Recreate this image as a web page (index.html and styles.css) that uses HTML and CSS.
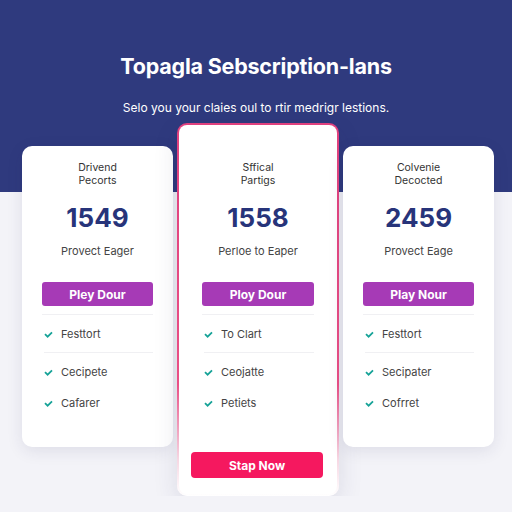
FILE: index.html
```html
<!DOCTYPE html>
<html lang="en">
<head>
  <meta charset="UTF-8">
  <title>Subscription Plans</title>
  <link rel="stylesheet" href="styles.css">
</head>
<body>
  <header class="hero">
    <h1>Topagla Sebscription-lans</h1>
    <p>Selo you your claies oul to rtir medrigr lestions.</p>
  </header>

  <section class="plans">
    <div class="plan">
      <div class="plan-name">Drivend<br>Pecorts</div>
      <div class="plan-price">1549</div>
      <div class="plan-note">Provect Eager</div>
      <button class="plan-btn">Pley Dour</button>
      <ul class="features">
        <li class="sep"><svg viewBox="0 0 10 8"><path d="M1 3.5 4 6.5 9 1.5"/></svg>Festtort</li>
        <li><svg viewBox="0 0 10 8"><path d="M1 3.5 4 6.5 9 1.5"/></svg>Cecipete</li>
        <li><svg viewBox="0 0 10 8"><path d="M1 3.5 4 6.5 9 1.5"/></svg>Cafarer</li>
      </ul>
    </div>

    <div class="plan featured">
      <div class="plan-name">Sffical<br>Partigs</div>
      <div class="plan-price">1558</div>
      <div class="plan-note">Perloe to Eaper</div>
      <button class="plan-btn">Ploy Dour</button>
      <ul class="features">
        <li class="sep"><svg viewBox="0 0 10 8"><path d="M1 3.5 4 6.5 9 1.5"/></svg>To Clart</li>
        <li><svg viewBox="0 0 10 8"><path d="M1 3.5 4 6.5 9 1.5"/></svg>Ceojatte</li>
        <li><svg viewBox="0 0 10 8"><path d="M1 3.5 4 6.5 9 1.5"/></svg>Petiets</li>
      </ul>
      <button class="cta-btn">Stap Now</button>
    </div>

    <div class="plan">
      <div class="plan-name">Colvenie<br>Decocted</div>
      <div class="plan-price">2459</div>
      <div class="plan-note">Provect Eage</div>
      <button class="plan-btn">Play Nour</button>
      <ul class="features">
        <li class="sep"><svg viewBox="0 0 10 8"><path d="M1 3.5 4 6.5 9 1.5"/></svg>Festtort</li>
        <li><svg viewBox="0 0 10 8"><path d="M1 3.5 4 6.5 9 1.5"/></svg>Secipater</li>
        <li><svg viewBox="0 0 10 8"><path d="M1 3.5 4 6.5 9 1.5"/></svg>Cofrret</li>
      </ul>
    </div>
  </section>
</body>
</html>
```

FILE: styles.css
```css
body {
  margin: 0;
  font-family: "Inter", "Liberation Sans", sans-serif;
  background-color: #f3f3f8;
}

.hero {
  height: 192px;
  box-sizing: border-box;
  padding-top: 52px;
  background-color: #2f3a7e;
  color: #ffffff;
  text-align: center;
}

.hero h1 {
  margin: 0;
  font-size: 21.5px;
  line-height: 28px;
  font-weight: 700;
  letter-spacing: -0.2px;
}

.hero p {
  margin: 20px 0 0;
  font-size: 12px;
  line-height: 16px;
}

.plans {
  display: flex;
  align-items: flex-start;
  gap: 4px;
  padding: 0 18px 0 22px;
  margin-top: -69px;
}

.plan {
  width: 151px;
  box-sizing: border-box;
  margin-top: 23px;
  padding: 15px 20px 32px;
  background-color: #ffffff;
  border-radius: 10px;
  box-shadow: 0 4px 16px rgba(40, 40, 90, 0.10);
  text-align: center;
}

.plan.featured {
  width: 162px;
  margin-top: 0;
  padding: 36px 23px 16px;
  border: 2px solid transparent;
  background: linear-gradient(#ffffff, #ffffff) padding-box,
    linear-gradient(#e0407e, #ea4f86 70%, #f6d6e2 90%, #ffffff) border-box;
  box-shadow: 0 8px 24px rgba(40, 40, 90, 0.12);
}

.plan-name {
  font-size: 10.5px;
  line-height: 13px;
  color: #333333;
}

.plan-price {
  margin-top: 16px;
  font-size: 26px;
  line-height: 30px;
  font-weight: 700;
  color: #27347a;
}

.plan-note {
  margin-top: 11px;
  font-size: 11px;
  line-height: 14px;
  color: #444444;
}

.plan-btn {
  display: block;
  width: 100%;
  height: 24px;
  margin-top: 24px;
  border: none;
  border-radius: 3px;
  background-color: #a63ab6;
  color: #ffffff;
  font-family: inherit;
  font-size: 12px;
  font-weight: 700;
}

.features {
  list-style: none;
  margin: 8px 0 0;
  padding: 0 0 0 2px;
  border-top: 1px solid #f0f0f3;
  text-align: left;
}

.features li {
  display: flex;
  align-items: center;
  gap: 8px;
  padding: 12px 0 5px;
  font-size: 11px;
  line-height: 14px;
  color: #444444;
}

.features li.sep {
  padding-bottom: 11px;
  border-bottom: 1px solid #f0f0f3;
}

.features svg {
  width: 9px;
  height: 7px;
  fill: none;
  stroke: #17a398;
  stroke-width: 2;
}

.cta-btn {
  display: block;
  width: 132px;
  height: 26px;
  margin: 37px -11px 0;
  border: none;
  border-radius: 4px;
  background-color: #f5185f;
  color: #ffffff;
  font-family: inherit;
  font-size: 12px;
  font-weight: 700;
}
```
